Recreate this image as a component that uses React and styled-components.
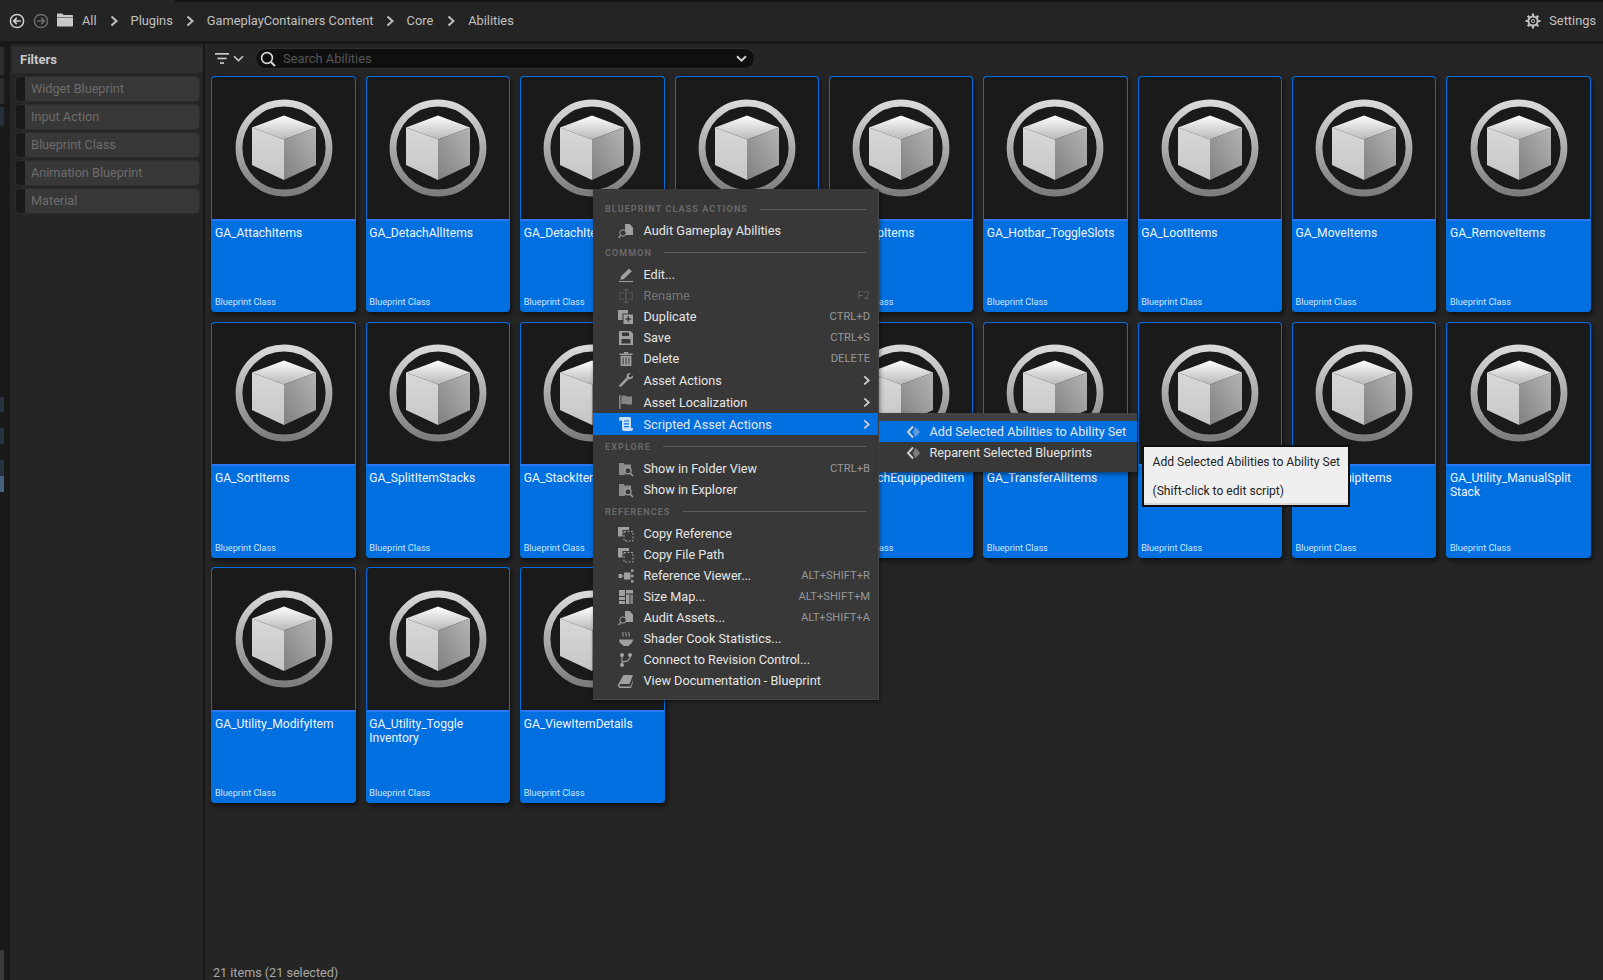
import styled, { createGlobalStyle } from "styled-components"

const GlobalStyle = createGlobalStyle`
  html, body {
    margin: 0;
    padding: 0;
    background: #252525;
  }
  * {
    box-sizing: border-box;
  }
  body {
    font-family: Roboto, "Liberation Sans", sans-serif;
  }
`

const Page = styled.div`
  position: relative;
  width: 1603px;
  height: 980px;
  overflow: hidden;
  display: flex;
  flex-direction: column;
  background: #252525;
`

const TopBar = styled.header`
  position: relative;
  height: 44px;
  flex: none;
  display: flex;
  align-items: center;
  padding: 0 7px 0 9px;
  background: #242424;
  border-bottom: 3px solid #171717;
  color: #c0c0c0;
  font-size: 12.8px;
  &::before {
    content: "";
    position: absolute;
    left: 175px;
    right: 0;
    top: 0;
    height: 2px;
    background: #141414;
  }
`

const NavButton = styled.span`
  display: flex;
  width: 16px;
  height: 16px;
  margin-right: ${(p) => p.$gap}px;
`

const Crumb = styled.span`
  display: flex;
  align-items: center;
`

const CrumbArrow = styled.span`
  display: flex;
  justify-content: center;
  width: ${(p) => p.$width}px;
`

const Spacer = styled.div`
  flex: 1;
`

const SettingsButton = styled.div`
  display: flex;
  align-items: center;
  gap: 8px;
`

const Body = styled.div`
  flex: 1;
  min-height: 0;
  display: flex;
`

const Rail = styled.div`
  width: 10px;
  flex: none;
  display: flex;
  flex-direction: column;
  background: #191919;
`

const RailTab = styled.div`
  width: 4px;
  height: ${(p) => p.$h}px;
  margin-top: ${(p) => p.$top}px;
  background: ${(p) => p.$color};
`

const Sidebar = styled.aside`
  width: 193px;
  flex: none;
  padding: 2.5px 0 0 2px;
  display: flex;
  flex-direction: column;
  gap: 4px;
  background: #252525;
`

const SidebarHead = styled.div`
  height: 26px;
  flex: none;
  padding-left: 8px;
  display: flex;
  align-items: center;
  background: #2f2f2f;
  color: #c8c8c8;
  font-size: 13px;
  font-weight: 700;
`

const FilterChip = styled.div`
  height: 24px;
  flex: none;
  margin: 0 4px;
  padding-left: 6px;
  display: flex;
  align-items: center;
  border-radius: 4px;
  border-left: 9px solid #191919;
  background: #383838;
  box-shadow: 0 0 0 1px #2d2d2d;
  color: #6c6c6c;
  font-size: 12.7px;
`

const Divider = styled.div`
  width: 2px;
  flex: none;
  background: #171717;
`

const Main = styled.main`
  position: relative;
  flex: 1;
  min-width: 0;
  display: flex;
  flex-direction: column;
  padding: 4px 6px 0 6.4px;
`

const SearchRow = styled.div`
  height: 21px;
  flex: none;
  display: flex;
  align-items: center;
`

const FilterButton = styled.div`
  width: 43.6px;
  flex: none;
  display: flex;
  align-items: center;
  padding-left: 4px;
  gap: 4px;
`

const SearchBox = styled.div`
  width: 500px;
  height: 21px;
  padding: 0 7px 0 4px;
  display: flex;
  align-items: center;
  border: 1px solid #2e2e2e;
  border-radius: 11px;
  background: #0f0f0f;
  color: #555;
  font-size: 12.9px;
`

const SearchText = styled.span`
  flex: 1;
  margin-left: 7px;
`

const Grid = styled.div`
  margin-top: 7.3px;
  display: grid;
  grid-template-columns: repeat(9, 144.38px);
  grid-auto-rows: 235.9px;
  gap: 9.5px 10px;
`

const Card = styled.article`
  display: flex;
  flex-direction: column;
  border-radius: 4px;
  overflow: hidden;
  background: #0070e0;
  box-shadow: 2px 3px 5px rgba(0, 0, 0, 0.55);
`

const Thumb = styled.div`
  height: 144.5px;
  flex: none;
  display: flex;
  align-items: center;
  justify-content: center;
  background: #1a1a1a;
  border: 1px solid #0070e0;
  border-bottom: 2px solid #2b78f2;
  border-radius: 4px 4px 0 0;
`

const CardLabel = styled.div`
  flex: 1;
  display: flex;
  flex-direction: column;
  justify-content: space-between;
  padding: 5px 3px 4px 3.5px;
`

const CardName = styled.div`
  color: #f0f5fc;
  font-size: 12.1px;
  line-height: 14.2px;
`

const CardType = styled.div`
  color: #d3e4f9;
  font-size: 9.15px;
  line-height: 12px;
`

const StatusBar = styled.footer`
  position: absolute;
  left: 8px;
  bottom: 0;
  color: #a8a8a8;
  font-size: 12.6px;
  line-height: 15px;
`

const Menu = styled.nav`
  position: absolute;
  left: 593px;
  top: 189px;
  width: 286px;
  height: 511px;
  padding-top: 9.4px;
  display: flex;
  flex-direction: column;
  background: #383838;
  border: 1px solid #474747;
  border-width: 0 1px 1px 0;
  box-shadow: 1px 2px 4px rgba(0, 0, 0, 0.45);
`

const MenuHeader = styled.div`
  height: ${(p) => p.$h}px;
  flex: none;
  padding: 0 12px;
  display: flex;
  align-items: center;
  gap: 12px;
  color: #686868;
  font-size: 9px;
  font-weight: 700;
  letter-spacing: 1.1px;
  &::after {
    content: "";
    flex: 1;
    height: 1px;
    background: #5e5e5e;
  }
`

const MenuRow = styled.div`
  height: ${(p) => p.$h || 21}px;
  flex: none;
  display: flex;
  align-items: center;
  padding: 0 8px 0 25px;
  background: ${(p) => (p.$active ? "#0070e0" : "transparent")};
  color: ${(p) => (p.$disabled ? "#777" : "#e6e6e6")};
  font-size: 12.7px;
`

const RowIcon = styled.span`
  display: flex;
  width: 16px;
  height: 16px;
  margin-right: 9.5px;
  color: ${(p) => (p.$disabled ? "#5c5c5c" : p.$active ? "#c9def6" : "#a0a0a0")};
`

const RowText = styled.span`
  flex: 1;
`

const Shortcut = styled.span`
  color: ${(p) => (p.$disabled ? "#5c5c5c" : "#979797")};
  font-size: 11.2px;
`

const SubArrow = styled.span`
  display: flex;
  margin-right: -1px;
  color: #cfcfcf;
`

const SubMenu = styled.div`
  position: absolute;
  left: 879px;
  top: 413px;
  width: 258px;
  height: 59px;
  background: #383838;
  border-top: 8.5px solid #414141;
  box-shadow: 1px 2px 4px rgba(0, 0, 0, 0.45);
`

const SubRow = styled.div`
  height: 21px;
  padding-left: 27px;
  display: flex;
  align-items: center;
  gap: 7.5px;
  background: ${(p) => (p.$active ? "#0070e0" : "transparent")};
  color: #e6e6e6;
  font-size: 12.7px;
`

const Tooltip = styled.div`
  position: absolute;
  left: 1141.5px;
  top: 444.5px;
  width: 208px;
  height: 62.5px;
  padding: 1px 0 0 9px;
  display: flex;
  flex-direction: column;
  justify-content: space-around;
  background: #efefef;
  border: 2px solid #0f0f0f;
  box-shadow: inset 0 -2px 0 #d8d8d8;
  color: #222;
  font-size: 12.1px;
`

const Line = styled.span`
  white-space: nowrap;
`

const Chevron = ({ size = 10, width = 2 }) => (
  <svg width={size} height={size * 1.2} viewBox="0 0 10 12" fill="none" stroke="currentColor" strokeWidth={width}>
    <path d="M2.5 1.5 7.5 6l-5 4.5" />
  </svg>
)

const CircleArrow = ({ dir, color }) => (
  <svg width="16" height="16" viewBox="0 0 16 16" fill="none" stroke={color} strokeWidth="1.5">
    <circle cx="8" cy="8" r="6.6" />
    <path
      d={dir === "left" ? "M11.8 8H5M7.8 4.8 4.7 8l3.1 3.2" : "M4.2 8H11M8.2 4.8 11.3 8l-3.1 3.2"}
      strokeWidth="1.7"
    />
  </svg>
)

const FolderIcon = () => (
  <svg width="16" height="14" viewBox="0 0 16 14" fill="#c9c9c9">
    <path d="M0 1.5C0 .9.4.5 1 .5h4.2l1.4 1.6H15c.6 0 1 .4 1 1V4H0z" />
    <path d="M0 4.6h16v8c0 .6-.4 1-1 1H1c-.6 0-1-.4-1-1z" />
  </svg>
)

const GearIcon = () => (
  <svg width="16" height="16" viewBox="0 0 16 16" fill="none" stroke="#c0c0c0">
    <circle cx="8" cy="8" r="4.6" strokeWidth="2" />
    <circle cx="8" cy="8" r="1.6" strokeWidth="1" />
    <path
      strokeWidth="2.2"
      d="M8 .5v2.4M8 13.1v2.4M.5 8h2.4M13.1 8h2.4M2.7 2.7l1.7 1.7M11.6 11.6l1.7 1.7M2.7 13.3l1.7-1.7M11.6 4.4l1.7-1.7"
    />
  </svg>
)

const FilterLines = () => (
  <svg width="14" height="13" viewBox="0 0 14 13" fill="#c8c8c8">
    <rect x="0" y="1" width="14" height="1.7" />
    <rect x="2.5" y="5.6" width="9" height="1.7" />
    <rect x="5" y="10.2" width="4" height="1.7" />
  </svg>
)

const SmallCaret = ({ color = "#c8c8c8", width = 1.6 }) => (
  <svg width="11" height="7" viewBox="0 0 11 7" fill="none" stroke={color} strokeWidth={width}>
    <path d="M1 1.2 5.5 5.6 10 1.2" />
  </svg>
)

const SearchGlass = () => (
  <svg width="16" height="16" viewBox="0 0 16 16" fill="none" stroke="#d6d6d6" strokeWidth="1.6">
    <circle cx="7" cy="7" r="5.4" />
    <path d="M11 11l4 4" strokeWidth="1.9" />
  </svg>
)

// the blueprint class thumbnail: ring with a shaded cube
const CubeThumb = () => (
  <svg width="98" height="98" viewBox="-49 -49 98 98">
    <defs>
      <linearGradient id="ring" x1="0" y1="0" x2="0" y2="1">
        <stop offset="0" stopColor="#d9d9d9" />
        <stop offset="1" stopColor="#7d7d7d" />
      </linearGradient>
      <linearGradient id="top" x1="0" y1="0" x2="0" y2="1">
        <stop offset="0" stopColor="#ffffff" />
        <stop offset="1" stopColor="#b8b8b8" />
      </linearGradient>
      <linearGradient id="left" x1="0" y1="0" x2="0" y2="1">
        <stop offset="0" stopColor="#d8d8d8" />
        <stop offset="1" stopColor="#c6c6c6" />
      </linearGradient>
      <linearGradient id="right" x1="0" y1="1" x2="1" y2="0">
        <stop offset="0" stopColor="#808080" />
        <stop offset="1" stopColor="#b4b4b4" />
      </linearGradient>
    </defs>
    <circle r="45" fill="none" stroke="url(#ring)" strokeWidth="6.8" />
    <path d="M0-32.5 32-20.5 0-8.5-32-20.5z" fill="url(#top)" />
    <path d="M-32-20.5 0-8.5V32L-32 17z" fill="url(#left)" />
    <path d="M32-20.5 0-8.5V32L32 17z" fill="url(#right)" />
  </svg>
)

const icons = {
  audit: (
    <>
      <path d="M7 1h4.500L15 4.500V12H7V3z" />
      <circle cx="5" cy="10" r="3.200" fill="#383838" stroke="currentColor" strokeWidth="1" />
      <path d="M2.700 12.400.6 15" fill="none" stroke="currentColor" strokeWidth="1.300" />
    </>
  ),
  edit: (
    <>
      <path d="M11 1.500l2.800 2.800L6 12l-3.800 1 1-3.800z" />
      <rect x="1" y="14" width="14" height="1" />
    </>
  ),
  rename: (
    <>
      <path d="M1 4h5v1.400H2.400v5.200H6V12H1zM10 4h5v8h-5v-1.400h3.600V5.400H10z" opacity="0.6" />
      <path d="M5.600 1h4.800v1.200H8.600v11.600h1.800V15H5.600v-1.200h1.800V2.200H5.600z" />
    </>
  ),
  duplicate: (
    <>
      <path d="M0 1h10v3.500H4.500V11H0z" />
      <path d="M5.500 5.500H15V15H5.500zM9.600 7.300v2H7.500v1.400h2.100v2.100H11v-2.100h2.100V9.300H11v-2z" fillRule="evenodd" />
    </>
  ),
  save: <path fillRule="evenodd" d="M1 1h11.500L15 3.500V15H1zM4 2.500V6h7V2.500zM3.500 9v4.600h9V9z" />,
  trash: (
    <>
      <path d="M1.500 2.500h13v1.400h-13zM6 1h4v1.200H6z" />
      <path fillRule="evenodd" d="M2.600 4.800h10.800V15H2.600zM4.600 6.400v7h1v-7zM7.500 6.400v7h1v-7zM10.400 6.400v7h1v-7z" />
    </>
  ),
  wrench: (
    <path d="M15 3.200c.3 1.500-.2 2.900-1.400 3.600-.9.500-1.900.6-2.800.3L3.400 14.500c-.5.500-1.300.5-1.800 0s-.5-1.300 0-1.800l7.200-7.400c-.3-.9-.2-1.900.3-2.800C9.800 1.300 11.300.8 12.800 1.100L10.700 3.200l.4 1.700 1.700.4z" />
  ),
  flag: (
    <>
      <rect x="1" y="1" width="1.600" height="14" opacity="0.75" />
      <path d="M3.400 2c3-1.400 5.400 1 8 .6l2.600-.4v8c-3.200 1.200-5.400-.2-8-.4-1 0-1.800.2-2.600.6z" opacity="0.75" />
    </>
  ),
  script: (
    <path
      fillRule="evenodd"
      d="M1 2.500C1 1.600 1.700 1 2.500 1h9c.9 0 1.500.7 1.500 1.500V12h2v1c0 1.100-.9 2-2 2H6c-1.100 0-2-.9-2-2V4.500H1zM6 4.400v1.200h5V4.400zM6 7.200v1.200h5V7.200zM6 10v1.200h5V10z"
    />
  ),
  folderSearch: (
    <>
      <path d="M1 2h4.500l1.200 1.400H13V9H7v5H1z" opacity="0.8" />
      <circle cx="10" cy="9.800" r="3.100" fill="#383838" stroke="currentColor" strokeWidth="1.200" />
      <path d="M12.200 12.200 15 15" fill="none" stroke="currentColor" strokeWidth="1.500" />
    </>
  ),
  copy: (
    <>
      <path d="M0 1h11v3H4.500v6.500H0z" />
      <path d="M6 5.500h9V15H6z" fill="none" stroke="currentColor" strokeWidth="1" strokeDasharray="2 1.500" />
    </>
  ),
  refs: (
    <>
      <rect x="6" y="4.500" width="6.500" height="7" />
      <rect x="0.500" y="6" width="3.500" height="4" />
      <rect x="13" y="1.500" width="2.500" height="2.500" />
      <rect x="13" y="12" width="2.500" height="2.500" />
      <rect x="13" y="6.800" width="2.500" height="2.500" />
      <path d="M4 7.500h2v1H4z" />
    </>
  ),
  sizemap: (
    <>
      <rect x="1" y="1" width="6" height="6" />
      <rect x="1" y="8" width="6" height="3" />
      <rect x="1" y="12" width="6" height="3" />
      <rect x="8" y="1" width="7" height="3.500" />
      <rect x="8" y="5.500" width="3.400" height="9.500" />
      <rect x="12.200" y="5.500" width="2.800" height="9.500" opacity="0.7" />
    </>
  ),
  bowl: (
    <>
      <path d="M1 8.500h14c0 2.800-1.800 4.800-4 5.400v1H5v-1c-2.200-.6-4-2.600-4-5.400z" />
      <path
        d="M5 1c-1 1.500 1 2.300 0 4.500M8 1c-1 1.500 1 2.300 0 4.500M11 1c-1 1.500 1 2.300 0 4.500"
        fill="none"
        stroke="currentColor"
        strokeWidth="1"
      />
    </>
  ),
  branch: (
    <>
      <circle cx="4" cy="3" r="2" />
      <circle cx="4" cy="13" r="2" />
      <circle cx="12" cy="3" r="2" />
      <path d="M3.400 3h1.200v10H3.400zM4 9.300c3 0 7.400-.6 7.400-5h1.200c0 5-5 6.400-8.600 6.400z" />
    </>
  ),
  book: (
    <path d="M5.500 2H15l-3.500 9H2.800c-.8 0-1.300.6-1.300 1.200s.5 1.200 1.300 1.200h9.700l2.500-6v1.800L13 15H2.500C1.100 15 0 14 0 12.500c0-.6.200-1.100.4-1.500z" />
  ),
}

const MenuIcon = ({ name, size = 16 }) => (
  <svg width={size} height={size} viewBox="0 0 16 16" fill="currentColor">
    {icons[name]}
  </svg>
)

const ScriptDiamond = () => (
  <svg width="16" height="16" viewBox="0 0 16 16" fill="none" stroke="#d0d0d0">
    <path d="M7 2.500 2 8l5 5.500" strokeWidth="1.900" />
    <path d="M9.500 2.800 14.200 8l-4.700 5.200L6.800 8z" fill="#d0d0d0" stroke="none" opacity="0.45" />
  </svg>
)

const names = [
  ["GA_AttachItems"],
  ["GA_DetachAllItems"],
  ["GA_DetachItems"],
  ["GA_DropItems"],
  ["GA_EquipItems"],
  ["GA_Hotbar_ToggleSlots"],
  ["GA_LootItems"],
  ["GA_MoveItems"],
  ["GA_RemoveItems"],
  ["GA_SortItems"],
  ["GA_SplitItemStacks"],
  ["GA_StackItems"],
  ["GA_SwapItems"],
  ["GA_SwitchEquippedItem"],
  ["GA_TransferAllItems"],
  ["GA_TransferItems"],
  ["GA_UnequipItems"],
  ["GA_Utility_ManualSplit", "Stack"],
  ["GA_Utility_ModifyItem"],
  ["GA_Utility_Toggle", "Inventory"],
  ["GA_ViewItemDetails"],
]

const filters = ["Widget Blueprint", "Input Action", "Blueprint Class", "Animation Blueprint", "Material"]

const railTabs = [
  { top: 3, h: 28, color: "#2d2d2d" },
  { top: 3, h: 26, color: "#2d2d2d" },
  { top: 3, h: 19, color: "#27303a" },
  { top: 271, h: 16, color: "#27323f" },
  { top: 16, h: 16, color: "#27323f" },
  { top: 16, h: 16, color: "#27323f" },
  { top: 0, h: 16, color: "#46607e" },
  { top: 458, h: 30, color: "#3a3a3a" },
]

const menu = [
  { header: "BLUEPRINT CLASS ACTIONS", h: 22 },
  { label: "Audit Gameplay Abilities", icon: "audit" },
  { header: "COMMON", h: 23 },
  { label: "Edit...", icon: "edit" },
  { label: "Rename", icon: "rename", shortcut: "F2", disabled: true },
  { label: "Duplicate", icon: "duplicate", shortcut: "CTRL+D" },
  { label: "Save", icon: "save", shortcut: "CTRL+S" },
  { label: "Delete", icon: "trash", shortcut: "DELETE" },
  { label: "Asset Actions", icon: "wrench", sub: true, h: 22 },
  { label: "Asset Localization", icon: "flag", sub: true, h: 22 },
  { label: "Scripted Asset Actions", icon: "script", sub: true, h: 22, active: true },
  { header: "EXPLORE", h: 23 },
  { label: "Show in Folder View", icon: "folderSearch", shortcut: "CTRL+B" },
  { label: "Show in Explorer", icon: "folderSearch" },
  { header: "REFERENCES", h: 23 },
  { label: "Copy Reference", icon: "copy" },
  { label: "Copy File Path", icon: "copy" },
  { label: "Reference Viewer...", icon: "refs", shortcut: "ALT+SHIFT+R" },
  { label: "Size Map...", icon: "sizemap", shortcut: "ALT+SHIFT+M" },
  { label: "Audit Assets...", icon: "audit", shortcut: "ALT+SHIFT+A" },
  { label: "Shader Cook Statistics...", icon: "bowl" },
  { label: "Connect to Revision Control...", icon: "branch" },
  { label: "View Documentation - Blueprint", icon: "book" },
]

const crumbs = [
  { label: "All", arrow: 34 },
  { label: "Plugins", arrow: 34 },
  { label: "GameplayContainers Content", arrow: 33 },
  { label: "Core", arrow: 35 },
  { label: "Abilities" },
]

const App = () => {
  return (
    <Page>
      <GlobalStyle />
      <TopBar>
        <NavButton $gap={8}>
          <CircleArrow dir="left" color="#cfcfcf" />
        </NavButton>
        <NavButton $gap={8}>
          <CircleArrow dir="right" color="#6b6b6b" />
        </NavButton>
        <NavButton $gap={9}>
          <FolderIcon />
        </NavButton>
        {crumbs.map((crumb) => (
          <Crumb key={crumb.label}>
            {crumb.label}
            {crumb.arrow && (
              <CrumbArrow $width={crumb.arrow}>
                <Chevron />
              </CrumbArrow>
            )}
          </Crumb>
        ))}
        <Spacer />
        <SettingsButton>
          <GearIcon />
          <span>Settings</span>
        </SettingsButton>
      </TopBar>

      <Body>
        <Rail>
          {railTabs.map((tab, index) => (
            <RailTab key={index} $top={tab.top} $h={tab.h} $color={tab.color} />
          ))}
        </Rail>
        <Sidebar>
          <SidebarHead>Filters</SidebarHead>
          {filters.map((filter) => (
            <FilterChip key={filter}>{filter}</FilterChip>
          ))}
        </Sidebar>
        <Divider />
        <Main>
          <SearchRow>
            <FilterButton>
              <FilterLines />
              <SmallCaret />
            </FilterButton>
            <SearchBox>
              <SearchGlass />
              <SearchText>Search Abilities</SearchText>
              <SmallCaret color="#d0d0d0" width={2} />
            </SearchBox>
          </SearchRow>
          <Grid>
            {names.map((name) => (
              <Card key={name[0]}>
                <Thumb>
                  <CubeThumb />
                </Thumb>
                <CardLabel>
                  <CardName>
                    {name[0]}
                    {name[1] && (
                      <>
                        <br />
                        {name[1]}
                      </>
                    )}
                  </CardName>
                  <CardType>Blueprint Class</CardType>
                </CardLabel>
              </Card>
            ))}
          </Grid>
          <StatusBar>21 items (21 selected)</StatusBar>
        </Main>
      </Body>

      <Menu>
        {menu.map((item) =>
          item.header ? (
            <MenuHeader key={item.header} $h={item.h}>
              {item.header}
            </MenuHeader>
          ) : (
            <MenuRow key={item.label + item.icon} $h={item.h} $active={item.active} $disabled={item.disabled}>
              <RowIcon $active={item.active} $disabled={item.disabled}>
                <MenuIcon name={item.icon} />
              </RowIcon>
              <RowText>{item.label}</RowText>
              {item.shortcut && <Shortcut $disabled={item.disabled}>{item.shortcut}</Shortcut>}
              {item.sub && (
                <SubArrow>
                  <Chevron size={9} />
                </SubArrow>
              )}
            </MenuRow>
          ),
        )}
      </Menu>

      <SubMenu>
        <SubRow $active>
          <ScriptDiamond />
          <span>Add Selected Abilities to Ability Set</span>
        </SubRow>
        <SubRow>
          <ScriptDiamond />
          <span>Reparent Selected Blueprints</span>
        </SubRow>
      </SubMenu>

      <Tooltip>
        <Line>Add Selected Abilities to Ability Set</Line>
        <Line>(Shift-click to edit script)</Line>
      </Tooltip>
    </Page>
  )
}

export default App
